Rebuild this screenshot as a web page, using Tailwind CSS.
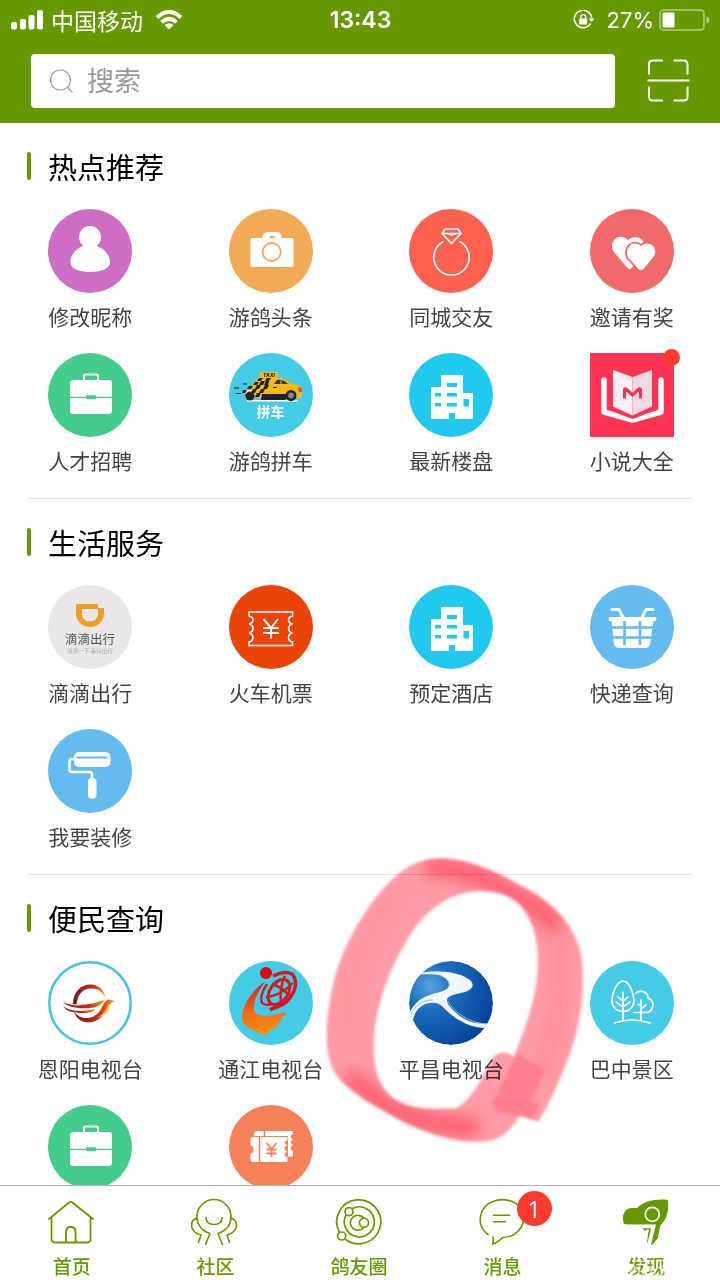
<!DOCTYPE html>
<html lang="zh-CN">
<head>
    <meta charset="UTF-8">
    <meta name="viewport" content="width=device-width, initial-scale=1.0">
    <title>发现</title>
    <script src="https://cdn.jsdelivr.net/npm/@tailwindcss/browser@4"></script>
</head>
<body class="h-screen flex flex-col overflow-hidden bg-white text-black font-['Noto_Sans_CJK_SC',sans-serif]">

    <!-- Shared icons -->
    <svg class="hidden">
        <symbol id="briefcase" viewBox="0 0 84 84">
            <path d="M36 28v-5q0-1.500 1.500-1.500h11q1.500 0 1.500 1.500v5" fill="none" stroke="#fff" stroke-width="2"/>
            <rect x="22" y="27" width="42" height="34" rx="3" fill="#fff"/>
            <path d="M22 44.300h42" stroke="#45cb8a" stroke-width="1.200"/>
            <rect x="38" y="42.300" width="10" height="4" rx="1" fill="#45cb8a"/>
        </symbol>
        <symbol id="building" viewBox="0 0 84 84">
            <path fill="#fff" fill-rule="evenodd" d="M33 22h20q1 0 1 1v17h9q1 0 1 1v24q0 1-1 1H46v-6h-6v6H23q-1 0-1-1V35q0-1 1-1h9V23q0-1 1-1zM38 30v4h10v-4zM38 40v3.500h10V40zM38 50v3.500h10V50zM26 40v3.500h6V40zM26 50v3.500h6V50zM54.500 46v7.500h5.500V46z"/>
        </symbol>
    </svg>

    <!-- Header -->
    <header class="bg-[#669900] text-white">
        <div class="h-10 grid grid-cols-[1fr_auto_1fr] items-center pl-[11px] pr-[10px]">
            <div class="flex items-center gap-2">
                <svg class="w-8 h-5" viewBox="0 0 32 20" fill="#fff">
                    <rect x="0" y="12" width="6" height="7.500" rx="2"/>
                    <rect x="9" y="9" width="6" height="10.500" rx="2"/>
                    <rect x="17.500" y="5" width="6" height="14.500" rx="2"/>
                    <rect x="26" y="0" width="6" height="19.500" rx="2"/>
                </svg>
                <span class="text-[23px] leading-9">中国移动</span>
                <svg class="w-7 h-5 ml-1" viewBox="0 0 28 20" fill="none" stroke="#fff" stroke-width="4">
                    <path d="M2 7.500Q14-3.500 26 7.500"/>
                    <path d="M6.500 12.300Q14 5.500 21.500 12.300"/>
                    <path d="M9.500 15.200Q14 11.500 18.500 15.200L14 19.500z" fill="#fff" stroke="none"/>
                </svg>
            </div>
            <time class="font-['Inter',sans-serif] font-semibold text-[23px]">13:43</time>
            <div class="flex items-center justify-end">
                <svg class="w-[22px] h-5 mr-3" viewBox="0 0 22 20" fill="none" stroke="#fff" stroke-width="1.600">
                    <path d="M17.500 13.500A8.700 8.700 0 1 1 18.700 8"/>
                    <path d="M15.500 8.500h6L18.600 12z" fill="#fff" stroke="none"/>
                    <rect x="6.200" y="8.500" width="8" height="6" rx=".8" fill="#fff" stroke="none"/>
                    <path d="M7.800 9V7a2.400 2.400 0 0 1 4.800 0v2" stroke-width="1.300"/>
                </svg>
                <span class="font-['Inter',sans-serif] text-[22px]">27%</span>
                <svg class="w-[51px] h-[22px] ml-[5px]" viewBox="0 0 51 22">
                    <rect x="1" y="1" width="44" height="20" rx="3.500" fill="none" stroke="#fff" stroke-opacity=".5" stroke-width="1.500"/>
                    <rect x="3.500" y="3.500" width="12" height="15" rx="1" fill="#fff"/>
                    <path d="M47.500 7.500q3 1 3 3.500t-3 3.500z" fill="#fff" fill-opacity=".5"/>
                </svg>
            </div>
        </div>
        <form class="flex items-center h-[83px] pb-[2px] pl-[31px] pr-[30px] gap-8">
            <label class="flex-1 flex items-center gap-[13px] h-[54px] pl-[19px] rounded bg-white" for="search">
                <svg class="w-6 h-6" viewBox="0 0 24 24" fill="none" stroke="#999" stroke-width="1.200">
                    <circle cx="10.500" cy="11" r="10"/>
                    <path d="M17.500 18.500l5 5"/>
                </svg>
                <input id="search" type="search" placeholder="搜索" class="flex-1 min-w-0 pb-[2px] text-[27px] leading-10 text-gray-700 placeholder:text-[#999] outline-none">
            </label>
            <button type="button" aria-label="扫一扫">
                <svg class="w-[43px] h-[43px]" viewBox="0 0 43 43" fill="none" stroke="#fff" stroke-width="2">
                    <path d="M2 15.500V5.500q0-4 4-4h10M26.500 1.500h10q4 0 4 4v10M2 27.500v10q0 4 4 4h10M26.500 41.500h10q4 0 4-4v-10M.5 21.500h42"/>
                </svg>
            </button>
        </form>
    </header>

    <main class="flex-1 min-h-0 overflow-hidden">
        <!-- Recommended -->
        <section>
            <h2 class="flex items-center pt-[23px] pb-[23px] pl-[27px] text-[29px] leading-10"><span class="w-1 h-7 mr-[17px] rounded-sm bg-[#669900]"></span>热点推荐</h2>
            <ul class="grid grid-cols-4 -mr-0.5 text-[21px] leading-7 text-[#444]">
                <li class="h-36"><a href="#" class="flex flex-col items-center gap-[9px]">
                    <svg class="w-[84px] h-[84px] rounded-full bg-[#cc6fc4]" viewBox="0 0 84 84" fill="#fff">
                        <circle cx="42" cy="28" r="11"/>
                        <path d="M35 35h14q-1 1.500 2 3c6 2.500 11 8.500 11 15 0 4-3.500 6.500-7 8-7 2.500-19 2.500-26 0-3.500-1.500-6.500-4-6.500-8C22.500 46.500 27 40.500 33 38q3-1.500 2-3z"/>
                    </svg>修改昵称</a></li>
                <li class="h-36"><a href="#" class="flex flex-col items-center gap-[9px]">
                    <svg class="w-[84px] h-[84px] rounded-full bg-[#f1aa56]" viewBox="0 0 84 84" fill="#fff">
                        <path d="M23 29h10q1-6 6-6h9q4 0 5 6h10q1.500 0 1.500 1.500v26q0 1.500-1.500 1.500H23q-1.500 0-1.500-1.500v-26Q21.500 29 23 29z"/>
                        <rect x="40.500" y="27" width="5.500" height="2" rx="1" fill="#f1aa56"/>
                        <circle cx="42.700" cy="43" r="9" stroke="#f1aa56" stroke-width="1.800"/>
                    </svg>游鸽头条</a></li>
                <li class="h-36"><a href="#" class="flex flex-col items-center gap-[9px]">
                    <svg class="w-[84px] h-[84px] rounded-full bg-[#ff6150]" viewBox="0 0 84 84" fill="none" stroke="#fff" stroke-width="1.600" stroke-linejoin="round">
                        <path d="M36 20h13l3 4.500-9.500 10L33 24.500zM33 24.500h19M38 24.500l4.500 1.500 5-1.500"/>
                        <path d="M34.500 32.500a17.700 17.700 0 1 0 16 0"/>
                    </svg>同城交友</a></li>
                <li class="h-36"><a href="#" class="flex flex-col items-center gap-[9px]">
                    <svg class="w-[84px] h-[84px] rounded-full bg-[#f06a6b]" viewBox="0 0 84 84" fill="#fff">
                        <path d="M38 31c-5-5-12-4-15 1.500-2.500 5-.5 9.500 3 13L38 59.500q2 1 3 0l6-7 7-19c-3-6-11-7-16-2.500z"/>
                        <path d="M51 61q-1.500 0-2.500-1L38.500 49c-2.500-4-2-9 1-12 3.500-3.500 8.500-3 11.500 0 3.500-3.500 9-3.500 12 0 3 3.500 3 8 0 11.500L53.500 60q-1 1-2.500 1z" stroke="#f06a6b" stroke-width="3.600" paint-order="stroke"/>
                    </svg>邀请有奖</a></li>
                <li class="h-36"><a href="#" class="flex flex-col items-center gap-[9px]">
                    <svg class="w-[84px] h-[84px] rounded-full bg-[#45cb8a]"><use href="#briefcase"/></svg>人才招聘</a></li>
                <li class="h-36"><a href="#" class="flex flex-col items-center gap-[9px]">
                    <svg class="w-[84px] h-[84px] rounded-full bg-[#45cbe6]" viewBox="0 0 84 84">
                        <path d="M31 19h18l-1 6H30z" fill="#f8bd13"/>
                        <text x="40" y="24" font-size="5" font-weight="800" font-style="italic" text-anchor="middle" font-family="Inter" fill="#222">TAXI</text>
                        <path d="M29 25h21q6 0 11 5l8 2q4 2 4 8l-1 5H18l-3-4z" fill="#f8b812"/>
                        <path d="M33 41h25v4l-2 2H32z" fill="#222"/>
                        <path d="M18 47h51v1.500H18z" fill="#fff"/>
                        <path d="M45 31l3-4q6-1 11 4z" fill="#333"/>
                        <path d="M52 31v-5.500" stroke="#f8b812"/>
                        <path d="M69 34l3.500 1 .5 4H70z" fill="#e94824"/>
                        <path d="M30 25h4l-2 3h-4zM38 25h4l-2 3h-4zM32 28h4l-2 4h-4zM40 28h-3l-2 4h4zM26 29h4l-2 3h-4zM20 33h4l-2 3h-4zM28 32h4l-2 4h-4zM36 32h4l-2 4h-4zM24 36h4l-2 4h-4zM32 36h4l-2 4h-4zM14 37h5l-2 3h-4zM28 40h4l-2 4h-4zM16 41h5v3h-4zM5 34.500h5v1H5zM14 30.500h4v1h-4zM7 40h5v1H7zM44 34h4v1h-4z" fill="#222"/>
                        <path d="M18 37h5l-2 4h-5z" fill="#fff"/>
                        <circle cx="21" cy="43" r="4.500" fill="#222"/>
                        <circle cx="62" cy="42.500" r="5.500" fill="#222"/>
                        <circle cx="62" cy="42.500" r="3" fill="#888"/>
                        <text x="41.500" y="63.500" font-size="14" font-weight="700" text-anchor="middle" fill="#fff">拼车</text>
                    </svg>游鸽拼车</a></li>
                <li class="h-36"><a href="#" class="flex flex-col items-center gap-[9px]">
                    <svg class="w-[84px] h-[84px] rounded-full bg-[#21c9ef]"><use href="#building"/></svg>最新楼盘</a></li>
                <li class="h-36"><a href="#" class="flex flex-col items-center gap-[9px]">
                    <span class="relative">
                        <svg class="w-[84px] h-[84px] bg-[#ff3453]" viewBox="0 0 84 84">
                            <path d="M14 27v32L42.500 67 71 59V27" fill="none" stroke="#fff" stroke-width="5.500" stroke-linecap="round" stroke-linejoin="round"/>
                            <path d="M17 15l25.500 7L68 15v41.500L42.500 66 17 56.500z" fill="#ff3453"/>
                            <path d="M23 17l19.500 7v38.500L23 53.500z" fill="#fbeef3"/>
                            <path d="M62 17l-19.500 7v38.500L62 53.500z" fill="#f5d9e1"/>
                            <path d="M34.500 45.500v-8q0-2.500 2-1l6 5.500 6-5.500q2-1.500 2 1v8" fill="none" stroke="#ef3657" stroke-width="3.200" stroke-linejoin="round"/>
                        </svg>
                        <span class="absolute -top-1 -right-[6px] w-[17px] h-[17px] rounded-full bg-[#ff3b30]"></span>
                    </span>小说大全</a></li>
            </ul>
            <hr class="mx-[27px] mt-px border-[#e2e2e2]">
        </section>

        <!-- Life services -->
        <section>
            <h2 class="flex items-center pt-[23px] pb-[23px] pl-[27px] text-[29px] leading-10"><span class="w-1 h-7 mr-[17px] rounded-sm bg-[#669900]"></span>生活服务</h2>
            <ul class="grid grid-cols-4 -mr-0.5 text-[21px] leading-7 text-[#444]">
                <li class="h-36"><a href="#" class="flex flex-col items-center gap-[9px]">
                    <svg class="w-[84px] h-[84px] rounded-full bg-[#e8e8e8]" viewBox="0 0 84 84">
                        <path fill="#eca029" fill-rule="evenodd" d="M29.500 19H50v4h6v5c0 8-6 14-14 14s-14-6-14-14v-7.500q0-1.500 1.500-1.500zM34 24v4c0 5 3.500 8.500 8 8.500s8-3.500 8-8.500v-4z"/>
                        <text x="42" y="59" font-size="12.500" text-anchor="middle" fill="#555">滴滴出行</text>
                        <text x="42" y="68" font-size="5.600" text-anchor="middle" fill="#aaa">滴滴一下 美好出行</text>
                    </svg>滴滴出行</a></li>
                <li class="h-36"><a href="#" class="flex flex-col items-center gap-[9px]">
                    <svg class="w-[84px] h-[84px] rounded-full bg-[#eb4409]" viewBox="0 0 84 84" fill="none" stroke="#fff" stroke-width="1.600">
                        <path d="M20 27h43.500v4q-4 1-4 4t4 4q-4 1-4 4.500t4 4.500q-4 1-4 4.500t4 4.500v3.500H20V57q4-1 4-4.500T20 48q4-1 4-4.500T20 39q4-1 4-4t-4-4z"/>
                        <path d="M34.500 34l7.500 9 7-9M42 43v10.500M34 43h16M34 48h16" stroke-width="2"/>
                    </svg>火车机票</a></li>
                <li class="h-36"><a href="#" class="flex flex-col items-center gap-[9px]">
                    <svg class="w-[84px] h-[84px] rounded-full bg-[#21c9ef]"><use href="#building"/></svg>预定酒店</a></li>
                <li class="h-36"><a href="#" class="flex flex-col items-center gap-[9px]">
                    <svg class="w-[84px] h-[84px] rounded-full bg-[#65baee]" viewBox="0 0 84 84">
                        <path d="M22 24.500h7l4 8M63 24.500h-7l-4 8" fill="none" stroke="#fff" stroke-width="3" stroke-linecap="round" stroke-linejoin="round"/>
                        <path d="M20 32h45q1.500 0 1.500 1.500T65 36h-1.500l-3.500 23q-.5 4-5 4H29q-4 0-5-4L21.500 36H20q-1.500 0-1.500-2t1.500-2z" fill="#fff"/>
                        <path d="M21 42.500h43M22 52.500h41M34.500 36v24M50 36v24" stroke="#65baee" stroke-width="2.600"/>
                    </svg>快递查询</a></li>
                <li class="h-36"><a href="#" class="flex flex-col items-center gap-[9px]">
                    <svg class="w-[84px] h-[84px] rounded-full bg-[#65baee]" viewBox="0 0 84 84">
                        <rect x="26" y="23" width="36.500" height="15" rx="5" fill="#fff"/>
                        <path d="M29.500 28.500h29" fill="none" stroke="#65baee" stroke-width="2" stroke-linecap="round"/>
                        <path d="M27 30h-3q-2.500 0-2.500 2.500v8q0 2.500 2.500 2.500h17.500q2.500 0 2.500 2.500V51" fill="none" stroke="#fff" stroke-width="2.600"/>
                        <rect x="40" y="49" width="8.500" height="20.500" rx="3.500" fill="#fff"/>
                    </svg>我要装修</a></li>
            </ul>
            <hr class="mx-[27px] mt-px border-[#e2e2e2]">
        </section>

        <!-- Public services -->
        <section>
            <h2 class="flex items-center pt-[23px] pb-[23px] pl-[27px] text-[29px] leading-10"><span class="w-1 h-7 mr-[17px] rounded-sm bg-[#669900]"></span>便民查询</h2>
            <ul class="grid grid-cols-4 -mr-0.5 text-[21px] leading-7 text-[#444]">
                <li class="h-36"><a href="#" class="flex flex-col items-center gap-[9px]">
                    <svg class="w-[84px] h-[84px]" viewBox="0 0 84 84">
                        <defs>
                            <linearGradient id="phoenix"><stop offset="0" stop-color="#7c1712"/><stop offset=".65" stop-color="#c8321b"/><stop offset="1" stop-color="#f3a01c"/></linearGradient>
                        </defs>
                        <circle cx="42" cy="42" r="40.700" fill="#fff" stroke="#45c4e2" stroke-width="2.500"/>
                        <path fill="url(#phoenix)" d="M25 43c0-12 8-20 18-19.500 7 0 13 5 14.500 13-3-6-8-9-14.500-9-8 0-13 5-14.500 16z"/>
                        <path fill="url(#phoenix)" d="M13 37c7 7 23 9 37 4l7-2c-4 5-9 8-16 8-12 1-21-1-26-6 6 3 14 4 19 3-8-1-16-2-21-7z"/>
                        <path fill="url(#phoenix)" d="M15 45c7 6 20 6 33 3-4 4-9 4-14 4-9 0-16-2-19-7z"/>
                        <path fill="url(#phoenix)" d="M26 51c7 9 20 7 25 0 5-6 4-11 10-12.500l5.500 1.500-3.500 2c-2 2-3 6-7 11-8 11-25 12-30-2z"/>
                        <path fill="#f4b434" d="M60 43c-2 7-6 11-11 14 8-2 12-7 13-14z"/>
                    </svg>恩阳电视台</a></li>
                <li class="h-36"><a href="#" class="flex flex-col items-center gap-[9px]">
                    <svg class="w-[84px] h-[84px] rounded-full bg-[#45cbe6]" viewBox="0 0 84 84">
                        <defs>
                            <linearGradient id="flame" x1=".4" y1="0" x2=".5" y2="1"><stop offset="0" stop-color="#c9281c"/><stop offset=".6" stop-color="#f56f13"/><stop offset="1" stop-color="#f69313"/></linearGradient>
                        </defs>
                        <circle cx="37" cy="12" r="6" fill="#dd0a12"/>
                        <path fill="url(#flame)" d="M36 21c-10 6-20 18-23 33-1 10 6 13 15 17 4 2 6 3 11 3l1-5c3-1 5-1 9-4l-1-2 5-4-1-2c3-2 5-3 5-6-12 4-24 6-31 1-3-6 0-18 10-31z"/>
                        <g fill="none" stroke="#d31a22" stroke-width="2.400">
                            <ellipse cx="50" cy="31" rx="9" ry="14" transform="rotate(35 50 31)" stroke-width="3"/>
                            <path d="M44 15q12-6 19-2 6 6 2 17-6 13-17 16-4 1-7 3" stroke-width="3.500"/>
                            <path d="M38 23q-8 12-5 19 3 3 10 1M43 23q10 3 19 13M56 15q-6 12-4 28M37 36q14-1 27-14"/>
                        </g>
                    </svg>通江电视台</a></li>
                <li class="relative h-36"><a href="#" class="flex flex-col items-center gap-[9px]">
                    <svg class="w-[84px] h-[84px] rounded-full" viewBox="0 0 84 84">
                        <defs>
                            <radialGradient id="globe" cx=".25" cy=".3" r=".8"><stop offset="0" stop-color="#5aa3df"/><stop offset=".35" stop-color="#1c6fbd"/><stop offset="1" stop-color="#04439a"/></radialGradient>
                        </defs>
                        <circle cx="42" cy="42" r="42" fill="url(#globe)"/>
                        <path fill="#f1f5fc" d="M11 12C20 10 33 10 42 11.500 50 13 58 16 62 20c4 5 0 9-6 11-8 2-16 3-18 7-1 5 7 13 16 19 8 5 16 6 24 5.500L77 67c-6 0-12-1-17-3C50 60 40 53 33 45c-3-3-8-4-13-3C11 44 6 50 4 59L0 53c4-9 9-14 18-18 9-4 20-4 22-10 1-5-4-9-10-11-5-1-12-1-19-.5z"/>
                        <path fill="none" stroke="#8fc0ea" d="M40 25c1-5-4-9-10-11M2 53C7 43 15 39 24 39M39 40c3 8 19 22 39 23"/>
                    </svg>平昌电视台</a>
                    <!-- Marker ring drawn over the item -->
                    <svg class="absolute -top-[121px] -left-[51px] w-[390px] h-[320px] max-w-none mix-blend-multiply pointer-events-none" viewBox="0 0 1170 960">
                        <defs>
                            <filter id="soft" filterUnits="userSpaceOnUse" x="0" y="0" width="1170" height="960"><feGaussianBlur stdDeviation="5"/></filter>
                            <filter id="softer" filterUnits="userSpaceOnUse" x="-100" y="-100" width="1370" height="1160"><feGaussianBlur stdDeviation="22"/></filter>
                            <clipPath id="ring"><path id="ring-shape" clip-rule="evenodd" fill-rule="evenodd" d="M400 55C480 58 560 95 640 140C740 190 790 260 810 330C830 430 815 560 765 680Q730 770 685 845L630 828Q580 905 520 905C440 910 340 880 250 830C170 785 110 750 75 700C35 630 50 520 70 430C95 320 170 190 250 115C300 70 340 55 400 55zM510 153C430 155 360 200 310 270C250 360 210 460 195 560C185 660 195 730 250 775C310 815 380 805 440 805C490 770 520 710 550 650Q580 625 612 650C640 580 670 500 680 420C690 330 680 240 620 185Q580 153 510 153z"/></clipPath>
                        </defs>
                        <g filter="url(#soft)">
                            <use href="#ring-shape" fill="#ff9ca5"/>
                            <g clip-path="url(#ring)" fill="none" stroke="#ff5f70" stroke-linecap="round">
                                <path d="M370 85Q460 80 540 125T660 190T730 250" stroke-width="60" filter="url(#softer)"/>
                                <path d="M130 720Q190 780 280 820T480 860" stroke-width="60" filter="url(#softer)"/>
                                <path d="M745 280Q780 420 700 680" stroke="#ff7f8c" stroke-width="50" filter="url(#softer)" opacity=".5"/>
                                <path d="M250 160Q110 330 100 600" stroke="#ff8995" stroke-width="30" filter="url(#softer)" opacity=".4"/>
                            </g>
                            <path d="M620 640L705 690L660 790L545 790z" fill="#ff7080" opacity=".6"/>
                            <path d="M545 785H690L670 835L560 815z" fill="#fa5f70" opacity=".45"/>
                        </g>
                    </svg>
                </li>
                <li class="h-36"><a href="#" class="flex flex-col items-center gap-[9px]">
                    <svg class="w-[84px] h-[84px] rounded-full bg-[#45cbe6]" viewBox="0 0 84 84" fill="none" stroke="#fff" stroke-width="1.700" stroke-linecap="round">
                        <path d="M33 20c-6 0-11 12-11 20 0 6 5 10.500 11 10.500S44 46 44 40c0-8-5-20-11-20zM33 31v29M33 40l-5-4M33 40l5-4M33 46l-7-5M33 46l7-5M46 32c5-4 12-1 12 5 5 2 6 7 4 11q-2 3.500-6 3.500H44M51 39v20M51 45l-3-2M51 48l5-4M24.500 62Q42 56 60 62"/>
                    </svg>巴中景区</a></li>
                <li class="h-36"><a href="#" class="flex flex-col items-center gap-[9px]" aria-label="求职招聘">
                    <svg class="w-[84px] h-[84px] rounded-full bg-[#45cb8a]"><use href="#briefcase"/></svg></a></li>
                <li class="h-36"><a href="#" class="flex flex-col items-center gap-[9px]" aria-label="优惠卡券">
                    <svg class="w-[84px] h-[84px] rounded-full bg-[#f58158]" viewBox="0 0 84 84" fill="#fff">
                        <path d="M28 26h36v3q-2.500 1-2.500 2.500T64 34.500q-2.500 1-2.500 2.500t2.500 3q-2.500 1-2.500 3t2.500 3v5.500h-5V31H25q0-5 3-5z"/>
                        <path d="M35.500 26v5" stroke="#f58158" stroke-width="1.500"/>
                        <path d="M24 32h34.500v3q-3 1-3 2.500t3 3q-3 1-3 3t3 3q-3 1-3 3t3 3V57H24q-2.500 0-2.500-2v-6q3-1.500 3-4.500t-3-4.500v-6q0-2 2.500-2z" stroke="#f58158" stroke-width="1" paint-order="stroke"/>
                        <path d="M30.500 32v25" stroke="#f58158" stroke-width="1.500"/>
                        <path d="M37.500 38l5 6 5-6M42.500 44v8M37.500 44.500h10M37.500 48.500h10" fill="none" stroke="#f58158" stroke-width="1.800"/>
                    </svg></a></li>
            </ul>
        </section>
    </main>

    <!-- Tab bar -->
    <nav class="relative h-[95px] border-t border-[#b2b2b2] bg-white text-[#669900]">
        <ul class="grid grid-cols-5 pt-3 pr-[2px] text-[19px] leading-7 font-medium">
            <li><a href="#" class="flex flex-col items-center gap-[6px]">
                <svg class="w-12 h-12" viewBox="0 0 48 48" fill="none" stroke="currentColor" stroke-width="1.800" stroke-linecap="round" stroke-linejoin="round">
                    <path d="M1 21L21 4.500q1.700-1.200 3.400 0L45 21M3.500 19.500V41q0 3.500 3.500 3.500h32q3.500 0 3.500-3.500V19.500M18 44.500V34q0-5 4.800-5t4.800 5v10.500"/>
                </svg>首页</a></li>
            <li><a href="#" class="flex flex-col items-center gap-[6px]">
                <svg class="w-12 h-12" viewBox="0 0 48 48" fill="none" stroke="currentColor" stroke-width="1.600" stroke-linecap="round" stroke-linejoin="round">
                    <path d="M19 35.500l-4.500 11M19 35.500Q6 31 6 18.500a17 17 0 0 1 34 0Q40 31 27 35.500l4.500 11M15 19.500q0 7 8 7t8-7M5.500 20Q-1 23 1 30q2 5 9 7l-2.500 7.500M40.500 20q6.500 3 4.500 10-2 5-9 7l2.500 7.500"/>
                </svg>社区</a></li>
            <li><a href="#" class="flex flex-col items-center gap-[6px]">
                <svg class="w-12 h-12" viewBox="0 0 48 48" fill="none" stroke="currentColor" stroke-width="1.700">
                    <path d="M4.500 34.500A22 22 0 1 1 10 41"/>
                    <path d="M17.500 10.500A15 15 0 1 1 11 17"/>
                    <path d="M29 20.500A7.500 7.500 0 1 0 29 29"/>
                    <circle cx="14" cy="13.700" r="4"/>
                    <circle cx="6.700" cy="38" r="4"/>
                    <circle cx="29" cy="24.700" r="4.500"/>
                </svg>鸽友圈</a></li>
            <li><a href="#" class="flex flex-col items-center gap-[6px]">
                <span class="relative">
                    <svg class="w-12 h-12" viewBox="0 0 48 48" fill="none" stroke="currentColor" stroke-width="1.600" stroke-linecap="round" stroke-linejoin="round">
                        <path d="M9 36.500C-4 27 .5 8 14 3.500 25-1 42 3 44.500 17c1.500 11-7 22-20.500 22.500-4 2.500-6 6-10.500 6.500 1.500-3 1-5 .5-7"/>
                        <path d="M14.500 17.300h16M14.500 23.700h12"/>
                    </svg>
                    <span class="absolute -top-[7px] left-[38px] w-[35px] h-[35px] rounded-full bg-[#ff3b30] text-white text-2xl leading-[35px] font-normal text-center font-['Open_Sans',sans-serif]">1</span>
                </span>消息</a></li>
            <li><a href="#" class="flex flex-col items-center gap-[6px]">
                <svg class="w-12 h-12" viewBox="0 0 48 48" fill="currentColor">
                    <path d="M46 2c1 9-.5 19-8 26l-2 12-6 7-5-2 1-9-8-8-16-2C-1 19 2 10 10 10h5C22 3 34 .5 46 2z"/>
                    <circle cx="30.300" cy="16.300" r="7" fill="none" stroke="#fff" stroke-width="1.700"/>
                </svg>发现</a></li>
        </ul>
        <!-- Watermark -->
        <div class="absolute right-1 bottom-0 flex flex-col items-center text-white italic pointer-events-none">
            <span class="pr-16 text-[32px] leading-8 font-bold">游戏网</span>
            <span class="text-[22px] leading-7 text-white/60">www.9883.com</span>
        </div>
    </nav>
</body>
</html>
